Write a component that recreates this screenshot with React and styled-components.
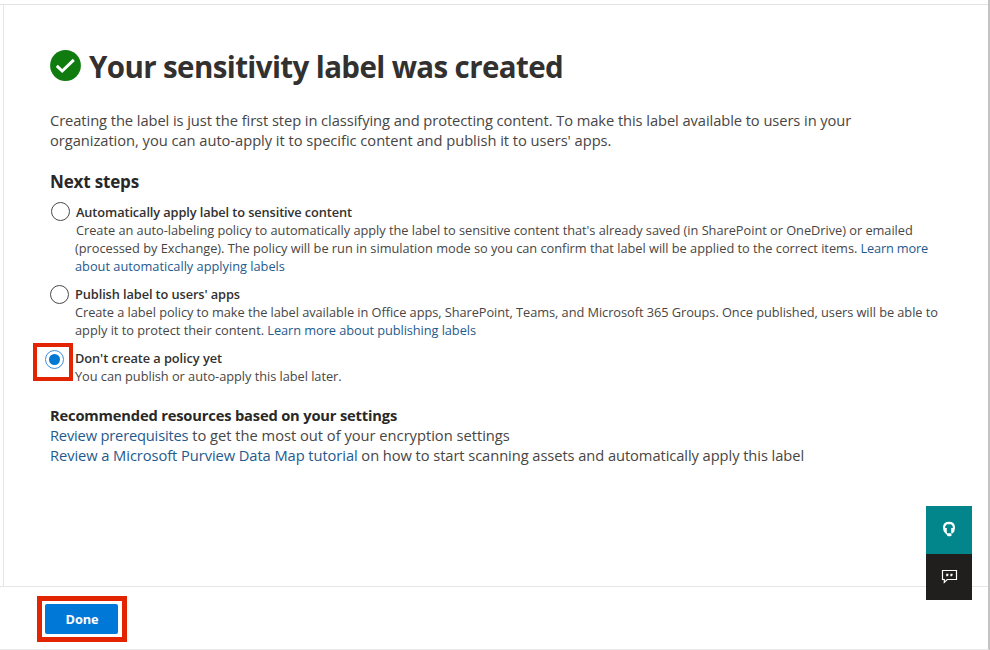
import React from 'react';
import styled, { createGlobalStyle } from 'styled-components';

const GlobalStyle = createGlobalStyle`
  * { box-sizing: border-box; }
  body { margin: 0; background: #fff; font-family: "Open Sans", "Noto Sans", sans-serif; color: #484644; }
`;

const Page = styled.div`
  position: relative;
  width: 990px;
  height: 650px;
  padding-top: 4px;
  display: flex;
  flex-direction: column;
  border-right: 2px solid #c3c3c3;
  border-bottom: 1px solid #e9e9e9;
  overflow: hidden;
`;

const Body = styled.div`
  height: 582px;
  padding-left: 3px;
  border-top: 1px solid #e3e3e3;
`;

const Content = styled.main`
  height: 581px;
  padding: 40px 0 0 46px;
  border-left: 1px solid #e6e6e6;
`;

const Heading = styled.h1`
  display: flex;
  align-items: center;
  gap: 8px;
  height: 42px;
  margin: 0;
  padding-top: 2px;
  color: #323130;
  font-size: 29.5px;
  line-height: 42px;
  font-weight: 700;
  letter-spacing: -0.61px;
  white-space: nowrap;

  svg { margin-top: -4px; }
`;

const Line = styled.div`
  white-space: nowrap;
  letter-spacing: ${(p) => p.$spacing || 0}px;
  padding-left: ${(p) => p.$indent || 0}px;
`;

const Intro = styled.div`
  margin-top: 23px;
  font-size: 14.7px;
  line-height: 20px;
`;

const SectionTitle = styled.h2`
  margin: 20px 0 0;
  font-size: 17px;
  line-height: 24px;
  font-weight: 700;
  letter-spacing: -0.16px;
  color: #292827;
`;

const Options = styled.div`
  display: flex;
  flex-direction: column;
  gap: 9.2px;
  margin-top: 8.5px;
`;

const Option = styled.div`
  display: flex;
  align-items: flex-start;
`;

const RadioColumn = styled.div`
  flex: none;
  width: 25px;
  padding-top: ${(p) => p.$top || 0}px;
  padding-left: ${(p) => p.$left || 0}px;
  margin-top: ${(p) => -(p.$lift || 0)}px;
  margin-left: ${(p) => -(p.$pull || 0)}px;
  margin-right: ${(p) => p.$pull || 0}px;
`;

const Radio = styled.span`
  display: flex;
  align-items: center;
  justify-content: center;
  width: 19px;
  height: 19px;
  border: 1px solid ${(p) => (p.$checked ? '#3a91dc' : '#4b4a48')};
  border-radius: 50%;

  &::after {
    content: '';
    width: 11px;
    height: 11px;
    border-radius: 50%;
    background: ${(p) => (p.$checked ? '#0078d4' : 'transparent')};
  }
`;

const OptionText = styled.div`
  font-size: 12.8px;
  line-height: 18.3px;
`;

const OptionTitle = styled(Line)`
  font-weight: 600;
  color: #323130;
`;

const Link = styled.a`
  color: #1f5a8d;
  text-decoration: none;
  letter-spacing: ${(p) => (p.$spacing === undefined ? 'inherit' : `${p.$spacing}px`)};
`;

const Resources = styled.section`
  margin-top: 19px;
  font-size: 14.7px;
  line-height: 20px;
`;

const ResourceTitle = styled(Line)`
  font-weight: 700;
  color: #292827;
`;

const Footer = styled.footer`
  display: flex;
  align-items: flex-start;
  height: 63px;
  border-top: 1px solid #e6e6e6;
  padding: 9px 0 0 37px;
`;

const ButtonHighlight = styled.div`
  width: 90px;
  height: 46px;
  padding: 3px 4px 4px 3px;
  border: 5px solid #e32400;
`;

const Button = styled.button`
  display: block;
  width: 73px;
  height: 30px;
  padding: 0 0 0 1px;
  border: 0;
  border-radius: 2px;
  background: #0078d7;
  color: #fff;
  font: 700 12.8px/30px "Open Sans", sans-serif;
  letter-spacing: -0.15px;
`;

const RadioHighlight = styled.div`
  position: absolute;
  left: 33px;
  top: 343px;
  width: 40px;
  height: 38px;
  border: 4px solid #e32400;
`;

const HelpDock = styled.aside`
  position: absolute;
  left: 926px;
  top: 506px;
  width: 46px;
  display: flex;
  flex-direction: column;
`;

const DockButton = styled.div`
  display: flex;
  align-items: center;
  justify-content: center;
  height: ${(p) => p.$height}px;
  padding-bottom: ${(p) => p.$raise || 0}px;
  background: ${(p) => p.$color};
`;

const SuccessIcon = () => (
  <svg width="31" height="31" viewBox="0 0 31 31">
    <circle cx="15.5" cy="15.5" r="15.4" fill="#107c10" />
    <path d="M6.8 15.9 L12.2 21 L23.8 9.9" fill="none" stroke="#fff" strokeWidth="2.9" />
  </svg>
);

const HeadsetIcon = () => (
  <svg width="14" height="16" viewBox="0 0 14 16">
    <path d="M4.8 12.2 H3.3 Q1 10.4 1 6.6 Q1 .7 7 .7 T13 6.6 Q13 10.4 11 12.2 H9.2 V6.9 H10.8 V5.2 L9 3.3 H5 L3.2 5.2 V6.9 H4.8Z" fill="#fff" />
    <path d="M4 11.6 L5.4 13.4" fill="none" stroke="#fff" strokeWidth="1.5" />
    <rect x="5" y="12.3" width="4.6" height="3" rx="1.4" fill="#fff" />
  </svg>
);

const FeedbackIcon = () => (
  <svg width="17" height="15" viewBox="0 0 17 15">
    <path d="M1.5 1.5 H15.5 V10.5 H6.2 L3.3 13.4 V10.5 H1.5Z" fill="none" stroke="#fff" strokeWidth="1.2" />
    <path d="M5.2 4.7 h2.2 v1.5 l-.8 1.1 h-1.4z M9.4 4.7 h2.2 v1.5 l-.8 1.1 h-1.4z" fill="#fff" />
  </svg>
);

export default function App() {
  return (
    <>
      <GlobalStyle />
      <Page>
        <Body>
          <Content>
            <Heading>
              <SuccessIcon />
              Your sensitivity label was created
            </Heading>
            <Intro>
              <Line $spacing={-0.074}>
                Creating the label is just the first step in classifying and protecting content. To make this label available to users in your
              </Line>
              <Line $spacing={-0.04}>
                organization, you can auto-apply it to specific content and publish it to users' apps.
              </Line>
            </Intro>
            <SectionTitle>Next steps</SectionTitle>
            <Options>
              <Option>
                <RadioColumn $left={1} $lift={1}>
                  <Radio />
                </RadioColumn>
                <OptionText>
                  <OptionTitle $spacing={-0.109} $indent={1}>Automatically apply label to sensitive content</OptionTitle>
                  <Line $spacing={-0.034} $indent={1}>
                    Create an auto-labeling policy to automatically apply the label to sensitive content that's already saved (in SharePoint or OneDrive) or emailed
                  </Line>
                  <Line $spacing={-0.022}>
                    (processed by Exchange). The policy will be run in simulation mode so you can confirm that label will be applied to the correct items. <Link $spacing={-0.2}>Learn more</Link>
                  </Line>
                  <Line $spacing={-0.01}><Link>about automatically applying labels</Link></Line>
                </OptionText>
              </Option>
              <Option>
                <RadioColumn>
                  <Radio />
                </RadioColumn>
                <OptionText>
                  <OptionTitle $spacing={-0.1}>Publish label to users' apps</OptionTitle>
                  <Line $spacing={-0.058}>
                    Create a label policy to make the label available in Office apps, SharePoint, Teams, and Microsoft 365 Groups. Once published, users will be able to
                  </Line>
                  <Line $spacing={-0.015}>
                    apply it to protect their content. <Link $spacing={-0.07}>Learn more about publishing labels</Link>
                  </Line>
                </OptionText>
              </Option>
              <Option>
                <RadioColumn $top={1} $pull={5}>
                  <Radio $checked />
                </RadioColumn>
                <OptionText>
                  <OptionTitle $spacing={-0.07}>Don't create a policy yet</OptionTitle>
                  <Line $spacing={-0.045}>You can publish or auto-apply this label later.</Line>
                </OptionText>
              </Option>
            </Options>
            <Resources>
              <ResourceTitle $spacing={-0.17}>Recommended resources based on your settings</ResourceTitle>
              <Line $spacing={-0.01}>
                <Link $spacing={-0.19}>Review prerequisites</Link> to get the most out of your encryption settings
              </Line>
              <Line $spacing={-0.073}>
                <Link>Review a Microsoft Purview Data Map tutorial</Link> on how to start scanning assets and automatically apply this label
              </Line>
            </Resources>
          </Content>
        </Body>
        <Footer>
          <ButtonHighlight>
            <Button>Done</Button>
          </ButtonHighlight>
        </Footer>
        <RadioHighlight />
        <HelpDock>
          <DockButton $height={48} $raise={2} $color="#03858c"><HeadsetIcon /></DockButton>
          <DockButton $height={46} $raise={1} $color="#201f1e"><FeedbackIcon /></DockButton>
        </HelpDock>
      </Page>
    </>
  );
}
